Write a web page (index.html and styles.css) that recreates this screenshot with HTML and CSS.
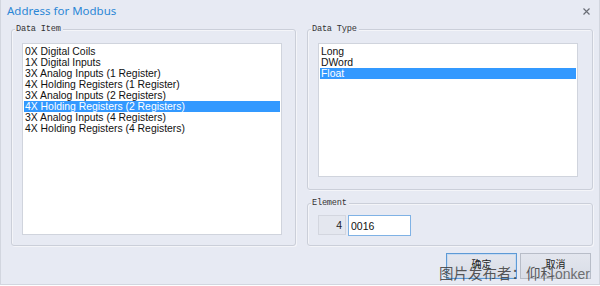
FILE: index.html
```html
<!DOCTYPE html>
<html lang="en">
<head>
    <meta charset="UTF-8">
    <title>Address for Modbus</title>
    <link rel="stylesheet" href="styles.css">
</head>
<body>
    <div class="window">
        <div class="titlebar">
            <span class="title">Address for Modbus</span>
            <button class="close-btn" title="Close">
                <svg width="7" height="7" viewBox="0 0 7 7"><path d="M0.5 0.5 L6.5 6.5 M6.5 0.5 L0.5 6.5" stroke="#6a6e76" stroke-width="1.2"/></svg>
            </button>
        </div>

        <div class="main">
            <!-- Data Item -->
            <div class="group group-item">
                <span class="legend">Data Item</span>
                <ul class="listbox list-item">
                    <li>0X Digital Coils</li>
                    <li>1X Digital Inputs</li>
                    <li>3X Analog Inputs (1 Register)</li>
                    <li>4X Holding Registers (1 Register)</li>
                    <li>3X Analog Inputs (2 Registers)</li>
                    <li class="selected">4X Holding Registers (2 Registers)</li>
                    <li>3X Analog Inputs (4 Registers)</li>
                    <li>4X Holding Registers (4 Registers)</li>
                </ul>
            </div>

            <div class="right-col">
                <!-- Data Type -->
                <div class="group group-type">
                    <span class="legend">Data Type</span>
                    <ul class="listbox list-type">
                        <li>Long</li>
                        <li>DWord</li>
                        <li class="selected">Float</li>
                    </ul>
                </div>

                <!-- Element -->
                <div class="group group-element">
                    <span class="legend">Element</span>
                    <div class="element-row">
                        <span class="prefix">4</span>
                        <input type="text" class="element-input" value="0016">
                    </div>
                </div>
            </div>
        </div>

        <div class="buttons">
            <button class="btn btn-default">确定</button>
            <button class="btn">取消</button>
        </div>

        <div class="watermark">图片发布者：仰科<span class="wm-latin">onker</span></div>
    </div>
</body>
</html>
```

FILE: styles.css
```css
body { margin: 0; background: #ffffff; font-family: "Liberation Sans", Arial, sans-serif; }
.window { position: relative; width: 600px; height: 285px; box-sizing: border-box; background: #e7eaf3; border: 1px solid #d2d6df; border-top: none; }

.titlebar { height: 22px; display: flex; align-items: center; justify-content: space-between; padding: 0 6px 0 6px; }
.title { font-family: "Noto Sans", "Liberation Sans", sans-serif; font-size: 11.5px; color: #2c87d6; margin-top: -1px; }
.close-btn { background: none; border: none; padding: 0; margin-right: 2px; width: 10px; height: 10px; display: flex; align-items: center; justify-content: center; }

.main { display: flex; gap: 11px; padding: 7px 6px 0 10px; }
.right-col { display: flex; flex-direction: column; gap: 13px; }

.group { box-sizing: border-box; border: 1px solid #cbcfd9; border-radius: 3px; box-shadow: inset 1px 1px 0 #f4f5f9, 1px 1px 0 #f4f5f9; padding: 0 13px 0 10px; }
.group-item { width: 285px; height: 217px; }
.group-type { width: 286px; height: 161px; padding-right: 14px; }
.group-element { width: 286px; height: 43px; }

.legend { display: block; width: max-content; margin: -7px 0 0 -7px; padding: 0 2px 0 1px; background: #e7eaf3; font-family: "Liberation Mono", "Courier New", monospace; font-size: 8.6px; line-height: 12px; color: #333; letter-spacing: -0.2px; }

.listbox { list-style: none; margin: 8px 0 0 0; padding: 2px 1px 0 1px; background: #fff; border: 1px solid #d0d4dd; box-sizing: border-box; }
.list-item { width: 260px; height: 192px; }
.list-type { width: 260px; height: 134px; }
.listbox li { font-size: 10.4px; line-height: 11px; height: 11px; padding-left: 1px; color: #111; white-space: nowrap; }
.listbox li.selected { background: #3399ff; color: #fff; }

.element-row { display: flex; gap: 2px; margin-top: 6px; }
.prefix { width: 28px; height: 20px; box-sizing: border-box; border: 1px solid #d3d6df; background: #e4e7ef; font-size: 10.5px; line-height: 18px; text-align: right; padding-right: 3px; color: #222; }
.element-input { width: 63px; height: 21px; box-sizing: border-box; border: 1px solid #7fb2e5; background: #fff; font-family: "Liberation Sans", Arial, sans-serif; font-size: 10.5px; padding: 0 2px; margin: 0; outline: none; color: #111; }

.buttons { display: flex; justify-content: flex-end; gap: 3px; padding: 7px 8px 0 0; }
.btn { width: 71px; height: 26px; box-sizing: border-box; border: 1px solid #b8bdc8; background: linear-gradient(#e3e6ee, #d9dde7); font-family: "Noto Sans CJK SC", sans-serif; font-size: 10px; color: #222; padding: 0 0 6px 0; }
.btn-default { border: 1px solid #5d9ad6; box-shadow: inset 0 0 0 1px #c7daf0; }

.watermark { position: absolute; left: 438px; top: 263px; font-family: "Noto Sans CJK SC", sans-serif; font-size: 14.5px; line-height: 20px; color: rgba(60, 60, 60, 0.85); white-space: nowrap; }
.wm-latin { font-family: "Liberation Sans", Arial, sans-serif; font-size: 14px; color: rgba(80, 80, 80, 0.8); }
```
